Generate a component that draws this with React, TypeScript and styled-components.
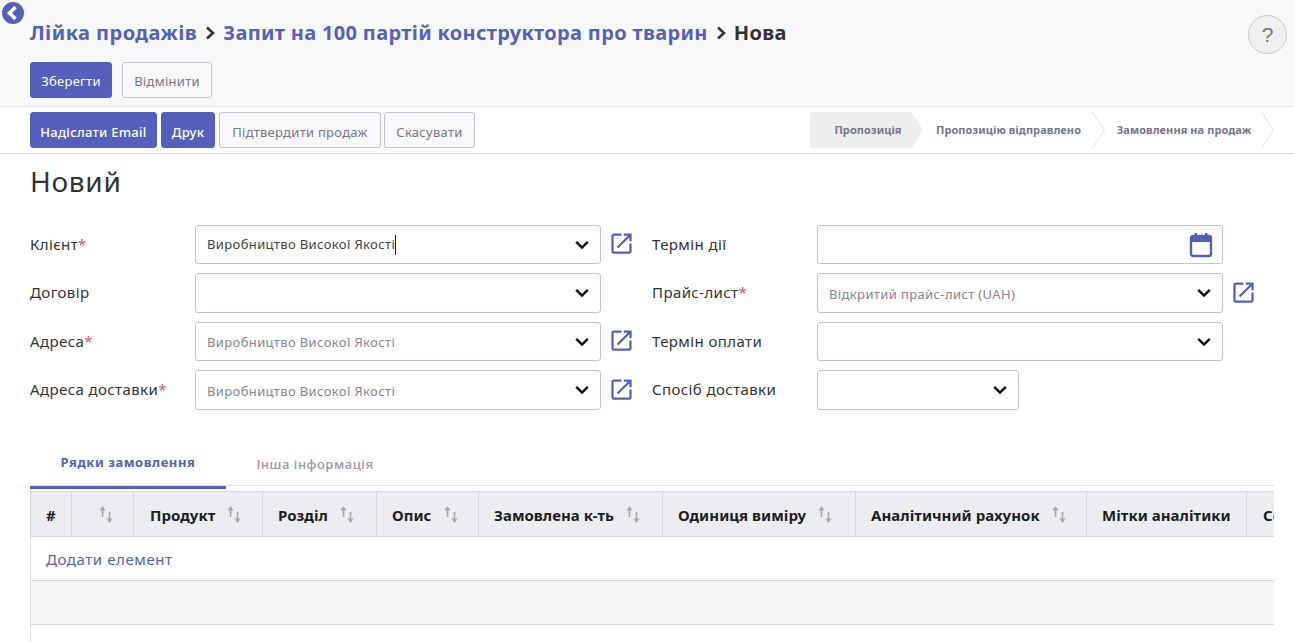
import React from "react";
import styled, { createGlobalStyle } from "styled-components";

const Global = createGlobalStyle`
  html, body { margin: 0; padding: 0; background: #fff; }
  body { font-family: "Noto Sans", "Open Sans", sans-serif; color: #333; overflow: hidden; height: 642px; }
  * { box-sizing: border-box; }
`;
const primary = "#5560bd";

const Page = styled.div`position: relative; width: 1294px; height: 642px; overflow: hidden;`;
const BackButton = styled.div`
  position: absolute; left: 2px; top: 2px; width: 22px; height: 22px; border-radius: 50%;
  background: ${primary}; display: flex; align-items: center; justify-content: center; padding-right: 2px;
`;
const HelpButton = styled.div`
  position: absolute; left: 1248px; top: 15px; width: 39px; height: 39px; border-radius: 50%;
  background: #f0f0f0; border: 1px solid #c8c8c8; color: #777; font-size: 21px;
  display: flex; align-items: center; justify-content: center; font-family: "Liberation Sans", sans-serif;
`;
const ControlPanel = styled.header`
  height: 107px; background: #f8f8f8; border-bottom: 1px solid #e6e6e6; padding: 18px 0 0 30px;
`;
const Breadcrumb = styled.div`
  display: flex; align-items: center; height: 30px; font-size: 20px; font-weight: 700; line-height: 30px;
  letter-spacing: 0.33px; margin-bottom: 14px; color: #333;
`;
const Crumb = styled.span<{ $wide?: boolean }>`
  color: ${primary}; letter-spacing: ${(p) => (p.$wide ? 0.45 : 0.33)}px;
`;
const CrumbSep = styled.svg`width: 11px; height: 14px; margin: 0 7px 0 8px; flex: none;`;
const ButtonRow = styled.div`display: flex; gap: ${(p: { $gap: number }) => p.$gap}px;`;
const Button = styled.div<{ $primary?: boolean; $w: number; $bold?: boolean; $drop?: number; $tight?: boolean }>`
  height: 36px; width: ${(p) => p.$w}px; border-radius: 3px; display: flex; align-items: center; justify-content: center;
  padding-top: ${(p) => p.$drop ?? 3}px; margin-left: ${(p) => (p.$tight ? -1 : 0)}px;
  font-size: 13px; letter-spacing: 0.28px; white-space: nowrap; font-weight: ${(p) => (p.$bold ? 500 : 400)};
  background: ${(p) => (p.$primary ? primary : "#f8f8fa")};
  color: ${(p) => (p.$primary ? "#fff" : "#777783")};
  border: 1px solid ${(p) => (p.$primary ? primary : "#c3c3ce")};
`;
const StatusBar = styled.div`
  height: 47px; border-bottom: 1px solid #d9d9d9; padding: 5px 20px 0 30px; display: flex; justify-content: space-between;
`;
const Stages = styled.div`display: flex; height: 36px; width: 464px; font-size: 11px; font-weight: 700; color: #777783; letter-spacing: 0.07px;`;
const Stage = styled.div<{ $w: number; $active?: boolean }>`
  position: relative; width: ${(p) => p.$w}px; flex: none; display: flex; align-items: center; justify-content: center; white-space: nowrap;
  padding: 0 ${(p) => (p.$active ? 0 : 11)}px 1px ${(p) => (p.$active ? 3 : 0)}px;
  background: ${(p) => (p.$active ? "#eeeeee" : "transparent")};
  clip-path: ${(p) => (p.$active ? "polygon(0 0, 90% 0, 100% 50%, 90% 100%, 0 100%)" : "none")};
  border-radius: ${(p) => (p.$active ? "3px 0 0 3px" : "0")};
`;
const StageChevron = styled.svg`position: absolute; right: 0; top: 0; width: 13px; height: 36px;`;
const Sheet = styled.main`padding: 10px 20px 0 30px;`;
const Title = styled.h1`margin: -1px 0 25.9px; font-size: 28px; font-weight: 400; line-height: 36px; letter-spacing: 0.7px; color: #333; height: 36px;`;
const FormGrid = styled.div`
  display: grid; grid-template-columns: 165px 406px 51px 165px 406px 32px; grid-auto-rows: 39.5px; row-gap: 9px; align-items: center;
`;
const Label = styled.div`font-size: 15px; letter-spacing: 0.4px; color: #333; margin-top: -2px; white-space: nowrap;`;
const Req = styled.span`color: #ec5157;`;
const Field = styled.div<{ $w?: number }>`
  height: 100%; width: ${(p) => (p.$w ? `${p.$w}px` : "100%")}; border: 1px solid #c3c3ce; border-radius: 3px;
  display: flex; align-items: center; justify-content: space-between; padding: 0 11px 0 11px; background: #fff;
`;
const FieldText = styled.span<{ $muted?: boolean }>`
  font-size: 13px; letter-spacing: 0.38px; padding-top: 1px; color: ${(p) => (p.$muted ? "#85858f" : "#444")};
`;
const Caret = styled.span`display: inline-block; width: 1px; height: 20px; background: #222; vertical-align: middle;`;
const IconSlot = styled.div`display: flex; align-items: center; padding-left: 7px; margin-top: -2px;`;
const ExternalIcon = styled.svg`width: 27px; height: 27px; flex: none; fill: ${primary};`;
const CalendarIcon = styled.svg`width: 24px; height: 26px; flex: none; margin-right: -2px;`;
const Tabs = styled.div`
  margin-top: 35.1px; display: flex; height: 41px; border-bottom: 1px solid #e0e0e4; width: 1244px;
`;
const Tab = styled.div<{ $active?: boolean; $w: number }>`
  width: ${(p) => p.$w}px; height: 44px; display: flex; align-items: center; justify-content: center; padding-bottom: 6px;
  font-size: 13px; letter-spacing: 0.55px; font-weight: ${(p) => (p.$active ? 700 : 500)};
  color: ${(p) => (p.$active ? primary : "#9a96a0")};
  border-bottom: ${(p) => (p.$active ? `3px solid ${primary}` : "none")};
`;
const TableWrap = styled.div`margin-top: 5px; width: 1244px; overflow: hidden; border-left: 1px solid #d8d8dc; height: 160px;`;
const Grid = styled.div`width: 1300px;`;
const HeadRow = styled.div`
  display: grid; grid-template-columns: 41px 62px 129px 114px 102px 184px 193px 231px 160px 85px; height: 46px;
  background: #ecedf0; border-top: 1px solid #d8d8dc; border-bottom: 1px solid #d8d8dc;
`;
const HeadCell = styled.div<{ $pad?: number }>`
  display: flex; align-items: center; padding: 3px 0 0 ${(p) => p.$pad ?? 15}px; border-right: 1px solid #d5d5da;
  font-size: 15px; font-weight: 700; color: #1d1d24; letter-spacing: 0.03px; white-space: nowrap;
`;
const SortIcon = styled.svg`width: 15px; height: 20px; margin: -1px 0 0 12px; flex: none;`;
const AddRow = styled.div`height: 44px; border-bottom: 1px solid #d8d8dc; display: flex; align-items: center; padding: 2px 0 0 15px;`;
const AddLink = styled.span`font-size: 15px; letter-spacing: 0.58px; color: ${primary};`;
const FillRow = styled.div`height: 44px; border-bottom: 1px solid #d8d8dc; background: #f6f6f8;`;

const Chevron = () => (
  <svg width="14" height="10" viewBox="0 0 14 10"><path d="M1.2 1.8L7 7.6L12.8 1.8" fill="none" stroke="#111" strokeWidth="2.5" /></svg>
);
const External = () => (
  <ExternalIcon viewBox="0 0 24 24">
    <path d="M19 19H5V5h7V3H5c-1.11 0-2 .9-2 2v14c0 1.1.89 2 2 2h14c1.1 0 2-.9 2-2v-7h-2v7zM14 3v2h3.59l-9.83 9.83 1.41 1.41L19 6.41V10h2V3h-7z" />
  </ExternalIcon>
);
const Calendar = () => (
  <CalendarIcon viewBox="0 0 24 26">
    <rect x="2" y="4" width="20" height="20" rx="2" fill="none" stroke={primary} strokeWidth="2.4" />
    <rect x="2" y="4" width="20" height="6" fill={primary} />
    <rect x="5.5" y="1" width="2.5" height="4" fill={primary} />
    <rect x="16" y="1" width="2.5" height="4" fill={primary} />
  </CalendarIcon>
);
const Sort = () => (
  <SortIcon viewBox="0 0 15 20">
    <path d="M3.5 12V4" fill="none" stroke="#a6a6ad" strokeWidth="1.6" />
    <path d="M0.5 5.5L3.5 1L6.5 5.5Z" fill="#a6a6ad" />
    <path d="M10.5 7V15" fill="none" stroke="#a6a6ad" strokeWidth="1.6" />
    <path d="M7.5 13.5L10.5 18L13.5 13.5Z" fill="#a6a6ad" />
  </SortIcon>
);
const Arrow = () => (
  <StageChevron viewBox="0 0 13 36"><path d="M0.5 0L12.5 18L0.5 36" fill="none" stroke="#e2e2e2" /></StageChevron>
);
const Sep = () => (
  <CrumbSep viewBox="0 0 11 14"><path d="M2 1.5L8 7L2 12.5" fill="none" stroke="#333" strokeWidth="2.6" /></CrumbSep>
);

const columns: { name: string; sort: boolean; pad?: number }[] = [
  { name: "#", sort: false },
  { name: "", sort: true, pad: 15 },
  { name: "Продукт", sort: true, pad: 16 },
  { name: "Розділ", sort: true },
  { name: "Опис", sort: true },
  { name: "Замовлена к-ть", sort: true },
  { name: "Одиниця виміру", sort: true },
  { name: "Аналітичний рахунок", sort: true },
  { name: "Мітки аналітики", sort: false },
  { name: "Собівартість", sort: false, pad: 16 },
];

export default function App() {
  return (
    <Page>
      <Global />
      <ControlPanel>
        <Breadcrumb>
          <Crumb $wide>Лійка продажів</Crumb><Sep />
          <Crumb>Запит на 100 партій конструктора про тварин</Crumb><Sep />
          <span>Нова</span>
        </Breadcrumb>
        <ButtonRow $gap={10}>
          <Button $primary $w={82} $drop={1}>Зберегти</Button>
          <Button $w={90} $drop={1}>Відмінити</Button>
        </ButtonRow>
      </ControlPanel>
      <StatusBar>
        <ButtonRow $gap={4}>
          <Button $primary $w={127} $bold>Надіслати Email</Button>
          <Button $primary $w={54} $bold>Друк</Button>
          <Button $w={162}>Підтвердити продаж</Button>
          <Button $w={91} $tight>Скасувати</Button>
        </ButtonRow>
        <Stages>
          <Stage $active $w={113}>Пропозиція</Stage>
          <Stage $w={182}>Пропозицію відправлено<Arrow /></Stage>
          <Stage $w={169}>Замовлення на продаж<Arrow /></Stage>
        </Stages>
      </StatusBar>
      <Sheet>
        <Title>Новий</Title>
        <FormGrid>
          <Label>Клієнт<Req>*</Req></Label>
          <Field><FieldText>Виробництво Високої Якості<Caret /></FieldText><Chevron /></Field>
          <IconSlot><External /></IconSlot>
          <Label>Термін дії</Label>
          <Field><span /><Calendar /></Field>
          <span />

          <Label>Договір</Label>
          <Field><span /><Chevron /></Field>
          <span />
          <Label>Прайс-лист<Req>*</Req></Label>
          <Field><FieldText $muted>Відкритий прайс-лист (UAH)</FieldText><Chevron /></Field>
          <IconSlot><External /></IconSlot>

          <Label>Адреса<Req>*</Req></Label>
          <Field><FieldText $muted>Виробництво Високої Якості</FieldText><Chevron /></Field>
          <IconSlot><External /></IconSlot>
          <Label>Термін оплати</Label>
          <Field><span /><Chevron /></Field>
          <span />

          <Label>Адреса доставки<Req>*</Req></Label>
          <Field><FieldText $muted>Виробництво Високої Якості</FieldText><Chevron /></Field>
          <IconSlot><External /></IconSlot>
          <Label>Спосіб доставки</Label>
          <Field $w={202}><span /><Chevron /></Field>
          <span />
        </FormGrid>
        <Tabs>
          <Tab $active $w={196}>Рядки замовлення</Tab>
          <Tab $w={178}>Інша інформація</Tab>
        </Tabs>
        <TableWrap>
          <Grid>
            <HeadRow>
              {columns.map((c, i) => (
                <HeadCell key={i} $pad={c.pad}>{c.name}{c.sort && <Sort />}</HeadCell>
              ))}
            </HeadRow>
            <AddRow><AddLink>Додати елемент</AddLink></AddRow>
            <FillRow />
          </Grid>
        </TableWrap>
      </Sheet>
      <BackButton>
        <svg width="14" height="16" viewBox="0 0 14 16"><path d="M10.5 2L4.5 8L10.5 14" fill="none" stroke="#fff" strokeWidth="3.6" /></svg>
      </BackButton>
      <HelpButton>?</HelpButton>
    </Page>
  );
}
